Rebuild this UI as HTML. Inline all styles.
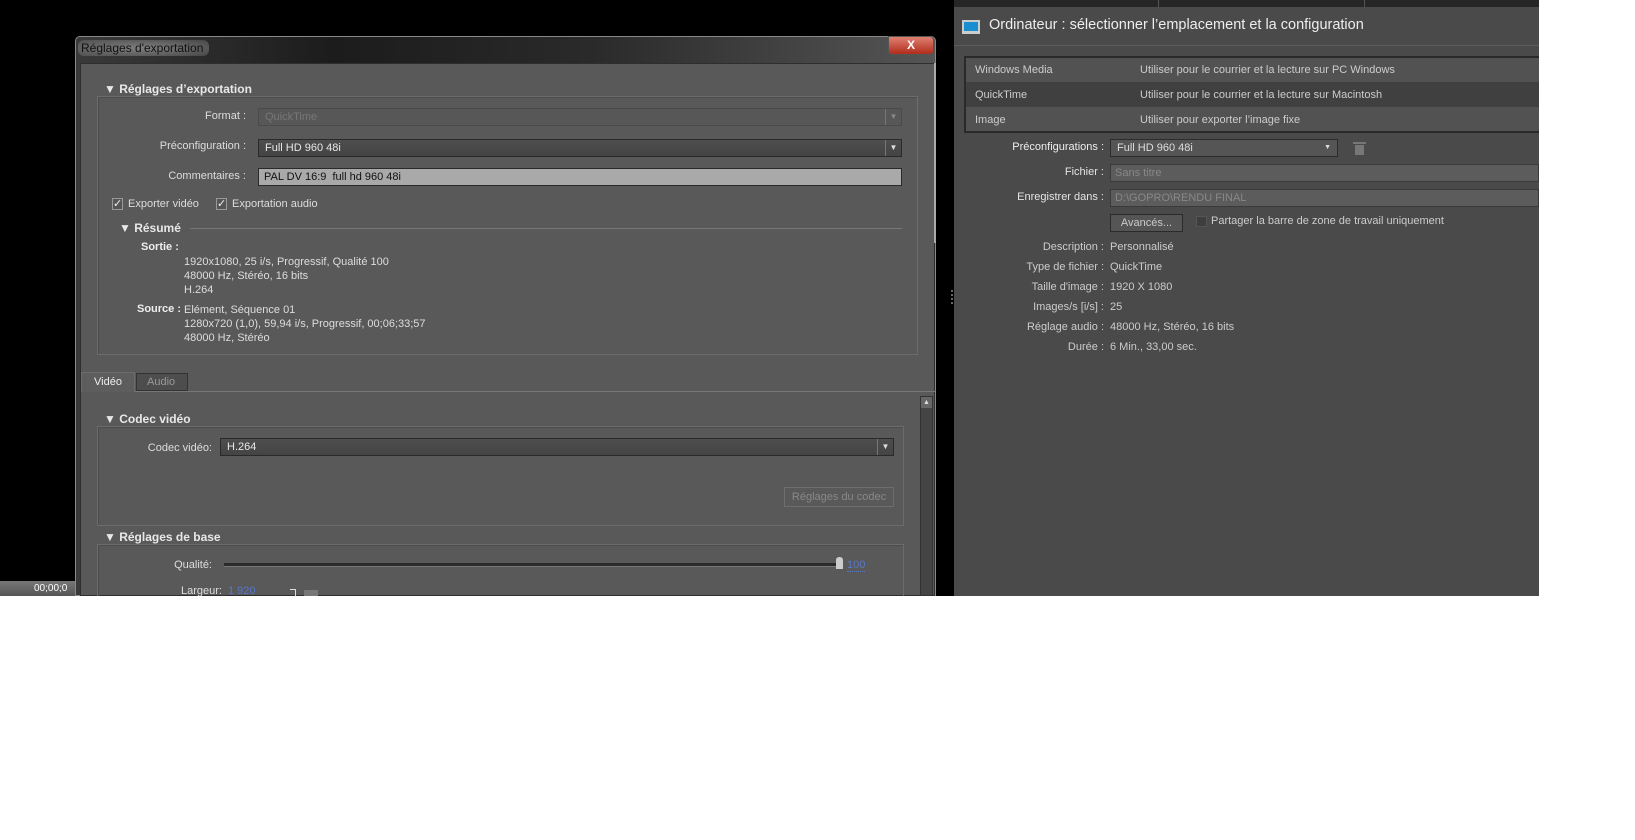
<!DOCTYPE html>
<html><head><meta charset="utf-8"><style>
*{margin:0;padding:0;box-sizing:border-box}
body{width:1635px;height:840px;background:#fff;position:relative;overflow:hidden;font-family:"Liberation Sans",sans-serif;font-size:11px;color:#ddd}
#w{position:absolute;left:0;top:0;width:1635px;height:596px;overflow:hidden}
.a{position:absolute;white-space:nowrap}
.r{text-align:right}
.fs{position:absolute;border:1px solid #6c6c6c;box-shadow:inset 1px 1px 0 #4c4c4c}
.hd{position:absolute;font-weight:bold;font-size:12px;color:#e8e8e8;background:#595959;padding:0 6px 0 4px;line-height:14px}
.dd{position:absolute;background:linear-gradient(#4e4e4e,#444);border:1px solid #2a2a2a;color:#e8e8e8;padding-left:6px;line-height:16px}
.dd .ar{position:absolute;right:0;top:0;width:16px;height:100%;border-left:1px solid #777;text-align:center;font-size:8px;color:#ddd}
.cb{position:absolute;width:11px;height:12px;border:1px solid #999;background:#555;font-size:11px;line-height:10px;color:#eee;text-align:center}
</style></head><body><div id="w">
<div class="a" style="left:0;top:0;width:1539px;height:596px;background:#000"></div>
<div class="a" style="left:0;top:581px;width:75px;height:15px;background:linear-gradient(#777,#555)"></div>
<div class="a" style="left:34px;top:583px;font-size:10px;color:#fff">00;00;0</div>
<div class="a" style="left:75px;top:36px;width:861px;height:560px;background:linear-gradient(90deg,#3a3a3a,#1c1c1c 30%,#2a2a2a 60%,#555 100%);border:1px solid #888;border-radius:5px 5px 0 0"></div>
<div class="a" style="left:78px;top:40px;font-size:12px;color:#111;background:radial-gradient(ellipse at center,rgba(190,190,190,.55),rgba(150,150,150,.25));padding:1px 6px 1px 3px;line-height:14px;border-radius:6px">Réglages d'exportation</div>
<div class="a" style="left:888px;top:36px;width:46px;height:19px;background:linear-gradient(#e08070,#b02c1c);border:1px solid #555;border-radius:0 4px 4px 4px;color:#fff;font-weight:bold;text-align:center;font-size:12px;line-height:17px">X</div>
<div class="a" style="left:80px;top:63px;width:855px;height:533px;background:#595959;border:1px solid #2e2e2e"></div>
<div class="a" style="left:934px;top:63px;width:2px;height:180px;background:#aaa"></div>
<div class="fs" style="left:97px;top:96px;width:821px;height:259px"></div>
<div class="hd" style="left:100px;top:82px">▼ Réglages d’exportation</div>
<div class="a r" style="left:150px;width:96px;top:110px;color:#ddd">Format :</div>
<div class="dd" style="left:258px;top:108px;width:644px;height:18px;background:#575757;border-color:#4a4a4a;color:#777">QuickTime<div class="ar" style="color:#888">▼</div></div>
<div class="a r" style="left:120px;width:126px;top:140px">Préconfiguration :</div>
<div class="dd" style="left:258px;top:139px;width:644px;height:18px">Full HD 960 48i<div class="ar">▼</div></div>
<div class="a r" style="left:120px;width:126px;top:170px">Commentaires :</div>
<div class="a" style="left:258px;top:168px;width:644px;height:18px;background:#a9a9a9;border:1px solid #2a2a2a;color:#111;padding-left:5px;line-height:16px">PAL DV 16:9 &nbsp;full hd 960 48i</div>
<div class="cb" style="left:112px;top:198px">✓</div><div class="a" style="left:128px;top:198px">Exporter vidéo</div>
<div class="cb" style="left:216px;top:198px">✓</div><div class="a" style="left:232px;top:198px">Exportation audio</div>
<div class="a" style="left:190px;top:228px;width:712px;height:1px;background:#767676"></div>
<div class="hd" style="left:115px;top:221px">▼ Résumé</div>
<div class="a" style="left:141px;top:241px;font-weight:bold;color:#eee">Sortie :</div>
<div class="a" style="left:184px;top:255px;line-height:14px">1920x1080, 25 i/s, Progressif, Qualité 100<br>48000 Hz, Stéréo, 16 bits<br>H.264</div>
<div class="a" style="left:137px;top:303px;font-weight:bold;color:#eee">Source :</div>
<div class="a" style="left:184px;top:303px;line-height:14px">Elément, Séquence 01<br>1280x720 (1,0), 59,94 i/s, Progressif, 00;06;33;57<br>48000 Hz, Stéréo</div>
<div class="a" style="left:81px;top:391px;width:854px;height:1px;background:#777"></div>
<div class="a" style="left:81px;top:372px;width:54px;height:20px;background:#5d5d5d;border:1px solid #6c6c6c;border-bottom:none;padding-left:12px;line-height:18px;color:#eee">Vidéo</div>
<div class="a" style="left:136px;top:373px;width:52px;height:18px;background:#4d4d4d;border:1px solid #333;padding-left:10px;line-height:16px;color:#999">Audio</div>
<div class="a" style="left:920px;top:396px;width:13px;height:200px;background:#444;border:1px solid #333"></div>
<div class="a" style="left:921px;top:397px;width:11px;height:11px;background:#666;font-size:7px;text-align:center;color:#ddd;line-height:11px">▲</div>
<div class="fs" style="left:97px;top:426px;width:807px;height:100px"></div>
<div class="hd" style="left:100px;top:412px">▼ Codec vidéo</div>
<div class="a r" style="left:120px;width:92px;top:442px">Codec vidéo:</div>
<div class="dd" style="left:220px;top:438px;width:674px;height:18px">H.264<div class="ar">▼</div></div>
<div class="a" style="left:784px;top:487px;width:110px;height:20px;border:1px solid #6e6e6e;color:#888;text-align:center;line-height:18px">Réglages du codec</div>
<div class="fs" style="left:97px;top:544px;width:807px;height:60px"></div>
<div class="hd" style="left:100px;top:530px">▼ Réglages de base</div>
<div class="a r" style="left:120px;width:92px;top:559px">Qualité:</div>
<div class="a" style="left:224px;top:563px;width:616px;height:4px;background:#2a2a2a;border-bottom:1px solid #777"></div>
<div class="a" style="left:836px;top:557px;width:7px;height:12px;background:#ccc;border-radius:3px 3px 0 0"></div>
<div class="a" style="left:847px;top:559px;color:#5a78c8;border-bottom:1px dotted #5a78c8">100</div>
<div class="a r" style="left:140px;width:82px;top:585px">Largeur:</div>
<div class="a" style="left:228px;top:585px;color:#5a78c8">1 920</div>
<div class="a" style="left:290px;top:589px;width:6px;height:7px;border-top:1px solid #ddd;border-right:1px solid #ddd"></div>
<div class="a" style="left:304px;top:590px;width:14px;height:6px;background:#777"></div>
<div class="a" style="left:951px;top:290px;width:2px;height:14px;border-left:2px dotted #666"></div>
<div class="a" style="left:954px;top:0;width:585px;height:596px;background:#4a4a4a"></div>
<div class="a" style="left:954px;top:0;width:585px;height:7px;background:#262626"></div>
<div class="a" style="left:1158px;top:0;width:1px;height:7px;background:#555"></div>
<div class="a" style="left:1364px;top:0;width:1px;height:7px;background:#555"></div>
<div class="a" style="left:962px;top:20px;width:18px;height:14px;background:#1a8fd0;border:2px solid #ccc;border-bottom-width:3px"></div>
<div class="a" style="left:989px;top:17px;font-size:14.5px;color:#eee">Ordinateur : sélectionner l’emplacement et la configuration</div>
<div class="a" style="left:954px;top:45px;width:585px;height:1px;background:#5c5c5c"></div>
<div class="a" style="left:964px;top:56px;width:575px;height:77px;background:#525252;border:2px solid #2a2a2a;border-right:none"></div>
<div class="a" style="left:966px;top:82px;width:573px;height:25px;background:#404040"></div>
<div class="a" style="left:975px;top:64px;color:#ccc">Windows Media</div><div class="a" style="left:1140px;top:64px;color:#ccc">Utiliser pour le courrier et la lecture sur PC Windows</div>
<div class="a" style="left:975px;top:89px;color:#ccc">QuickTime</div><div class="a" style="left:1140px;top:89px;color:#ccc">Utiliser pour le courrier et la lecture sur Macintosh</div>
<div class="a" style="left:975px;top:114px;color:#ccc">Image</div><div class="a" style="left:1140px;top:114px;color:#ccc">Utiliser pour exporter l’image fixe</div>
<div class="a r" style="left:980px;width:124px;top:141px;color:#eee">Préconfigurations :</div>
<div class="a" style="left:1110px;top:139px;width:228px;height:18px;background:#555;border:1px solid #2c2c2c;color:#ddd;padding-left:6px;line-height:16px">Full HD 960 48i<span style="position:absolute;right:6px;font-size:7px">▼</span></div>
<div class="a" style="left:1353px;top:142px;width:13px;height:2px;background:#777"></div>
<div class="a" style="left:1355px;top:145px;width:9px;height:10px;background:#777"></div>
<div class="a r" style="left:980px;width:124px;top:166px;color:#e4e4e4">Fichier :</div>
<div class="a" style="left:1110px;top:164px;width:429px;height:18px;background:#5c5c5c;border:1px solid #3a3a3a;color:#888;padding-left:4px;line-height:16px">Sans titre</div>
<div class="a r" style="left:980px;width:124px;top:191px;color:#e4e4e4">Enregistrer dans :</div>
<div class="a" style="left:1110px;top:189px;width:429px;height:18px;background:#5c5c5c;border:1px solid #3a3a3a;color:#888;padding-left:4px;line-height:16px">D:\GOPRO\RENDU FINAL</div>
<div class="a" style="left:1110px;top:214px;width:73px;height:18px;background:#555;border:1px solid #2a2a2a;color:#ccc;text-align:center;line-height:16px">Avancés...</div>
<div class="a" style="left:1196px;top:216px;width:11px;height:11px;background:#3e3e3e;border:1px solid #555"></div>
<div class="a" style="left:1211px;top:215px;color:#ccc">Partager la barre de zone de travail uniquement</div>
<div class="a r" style="left:980px;width:124px;top:237px;color:#ccc;line-height:20px">Description :<br>Type de fichier :<br>Taille d'image :<br>Images/s [i/s] :<br>Réglage audio :<br>Durée :</div>
<div class="a" style="left:1110px;top:237px;color:#ccc;line-height:20px">Personnalisé<br>QuickTime<br>1920 X 1080<br>25<br>48000 Hz, Stéréo, 16 bits<br>6 Min., 33,00 sec.</div>
</div></body></html>
